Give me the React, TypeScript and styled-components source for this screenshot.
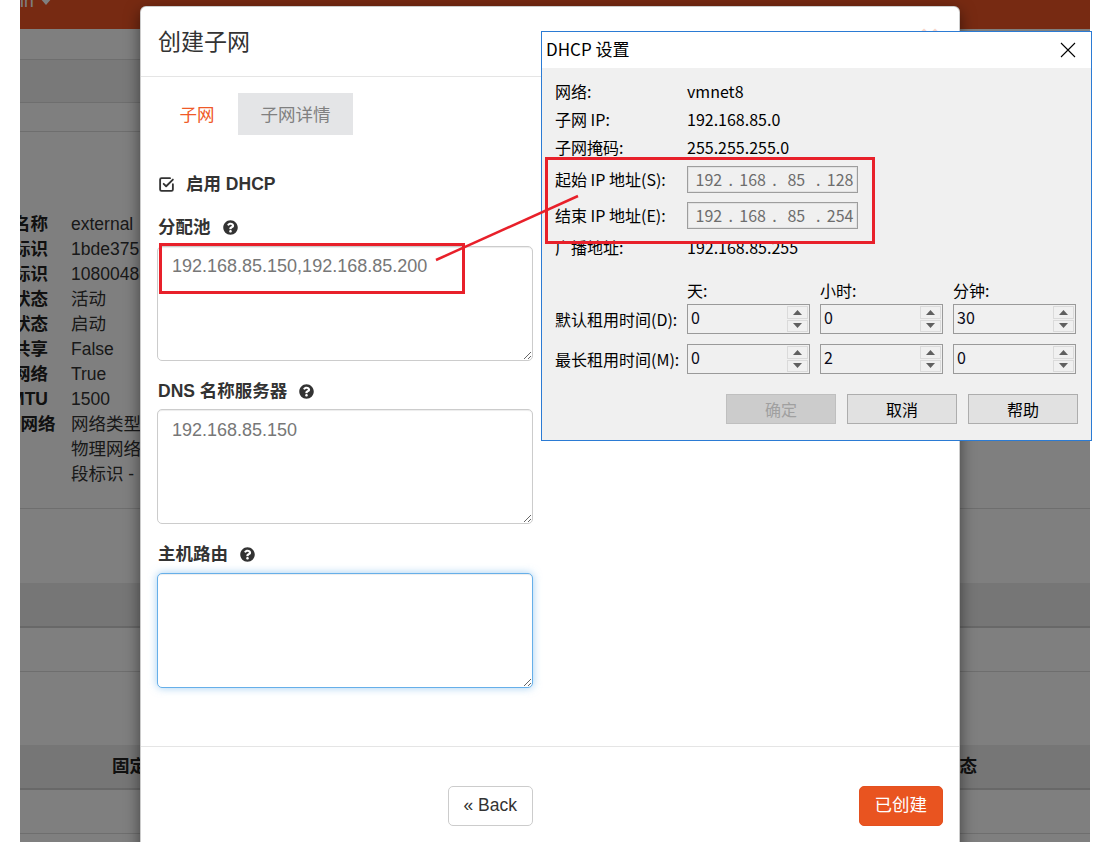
import React from "react";
import styled, { createGlobalStyle } from "styled-components";
import { FaQuestionCircle } from "react-icons/fa";

const GlobalStyle = createGlobalStyle`
  html, body { margin: 0; padding: 0; background: #fff; }
  body { font-family: "Liberation Sans", "Noto Sans CJK SC", sans-serif; }
  * { box-sizing: border-box; }
`;

const Canvas = styled.div`
  position: relative;
  width: 1095px;
  height: 857px;
  overflow: hidden;
`;

const Screen = styled.div`
  position: relative;
  margin-left: 20px;
  width: 1070px;
  height: 842px;
  overflow: hidden;
  background: #fff;
  font-family: "Liberation Sans", "Noto Sans CJK SC", sans-serif;
  color: #333;
  font-size: 17.5px;
  line-height: 25px;
`;

/* ---------- background page ---------- */
const Navbar = styled.div`
  height: 29px;
  background: #ee5424;
  display: flex;
  align-items: flex-start;
`;

const UserMenu = styled.div`
  display: flex;
  align-items: center;
  margin-left: -34px;
  margin-top: -8px;
  color: #fff;
  line-height: 18px;
  white-space: nowrap;
`;

const Caret = styled.span`
  display: inline-block;
  margin-left: 6px;
  border-left: 6px solid transparent;
  border-right: 6px solid transparent;
  border-top: 7px solid #fff;
`;

const Band = styled.div<{ $h: number; $bg?: string; $line?: number }>`
  height: ${(p) => p.$h}px;
  background: ${(p) => p.$bg || "#fff"};
  border-bottom: ${(p) => (p.$line ? `${p.$line}px solid #dcdcdc` : "none")};
`;

const DetailSection = styled.div`
  height: 377px;
  padding-top: 80px;
  border-bottom: 1px solid #dcdcdc;
`;

const DetailList = styled.dl`
  margin: 0 0 0 -52px;
  display: grid;
  grid-template-columns: 80px auto;
  column-gap: 23px;
  white-space: nowrap;
`;

const DetailTerm = styled.dt`
  font-weight: bold;
  text-align: right;
  color: #222;
`;

const DetailValue = styled.dd`
  margin: 0;
`;

const TableHead = styled.div`
  height: 45px;
  background: #ececec;
  border-bottom: 2px solid #d0d0d0;
  display: flex;
  align-items: center;
  font-weight: bold;
  color: #222;
`;

const HeadCell = styled.span<{ $right?: boolean }>`
  margin-left: ${(p) => (p.$right ? "auto" : "92px")};
  margin-right: ${(p) => (p.$right ? "113px" : "0")};
`;

const Backdrop = styled.div`
  position: absolute;
  inset: 0;
  background: rgba(0, 0, 0, 0.5);
`;

/* ---------- modal ---------- */
const Modal = styled.div`
  position: absolute;
  left: 120px;
  top: 6px;
  width: 820px;
  background: #fff;
  border: 1px solid rgba(0, 0, 0, 0.2);
  border-radius: 6px;
  box-shadow: 0 5px 15px rgba(0, 0, 0, 0.5);
`;

const ModalHeader = styled.div`
  height: 70px;
  display: flex;
  align-items: center;
  justify-content: space-between;
  padding: 0 16px 0 17px;
  border-bottom: 1px solid #e5e5e5;
`;

const ModalTitle = styled.h4`
  margin: 0 0 2px;
  font-family: "Noto Sans CJK SC", sans-serif;
  font-size: 23px;
  font-weight: 400;
  color: #333;
`;

const CloseX = styled.span`
  margin-top: -10px;
  margin-right: 4px;
  font-size: 32px;
  font-weight: bold;
  color: #e95420;
  opacity: 0.25;
`;

const ModalBody = styled.div`
  padding: 16px 16px 58px;
  border-bottom: 1px solid #e5e5e5;
`;

const Tabs = styled.div`
  display: flex;
  gap: 1px;
`;

const Tab = styled.div<{ $active?: boolean }>`
  padding: 8px 22.5px 9px;
  font-family: "Noto Sans CJK SC", sans-serif;
  font-size: 17.5px;
  line-height: 25px;
  color: ${(p) => (p.$active ? "#ef5a28" : "#808080")};
  background: ${(p) => (p.$active ? "transparent" : "#e4e5e7")};
`;

const FormGrid = styled.div`
  margin-top: 37px;
  display: grid;
  grid-template-columns: 376px 1fr;
  column-gap: 20px;
`;

const FormColumn = styled.div`
  display: flex;
  flex-direction: column;
`;

const CheckRow = styled.div`
  display: flex;
  align-items: center;
  gap: 11px;
  height: 25px;
  font-weight: bold;
  padding-left: 1px;
`;

const FormGroup = styled.div`
  margin-top: 18px;
`;

const FieldLabel = styled.div`
  display: flex;
  align-items: center;
  gap: 12px;
  margin-bottom: 5.5px;
  font-weight: bold;
  padding-left: 1px;
  color: #333;
`;

const TextArea = styled.textarea<{ $focused?: boolean }>`
  display: block;
  width: 100%;
  height: 115px;
  margin: 0;
  padding: 7.5px 14px;
  font-family: "Liberation Sans", sans-serif;
  font-size: 18px;
  line-height: 25px;
  color: #777;
  background: #fff;
  border: 1px solid ${(p) => (p.$focused ? "#66afe9" : "#ccc")};
  border-radius: 5px;
  box-shadow: inset 0 1px 1px rgba(0, 0, 0, 0.075)
    ${(p) => (p.$focused ? ", 0 0 8px rgba(102, 175, 233, 0.6)" : "")};
  resize: vertical;
  outline: none;
`;

const ModalFooter = styled.div`
  padding: 39px 16px 40px;
  display: grid;
  grid-template-columns: 376px 1fr;
  column-gap: 20px;
`;

const Button = styled.button<{ $primary?: boolean }>`
  justify-self: end;
  padding: 6.5px 15px;
  font-family: "Liberation Sans", "Noto Sans CJK SC", sans-serif;
  font-size: 17.5px;
  line-height: 25px;
  border-radius: 5px;
  border: 1px solid ${(p) => (p.$primary ? "#e4501f" : "#ccc")};
  background: ${(p) => (p.$primary ? "#e95420" : "#fff")};
  color: ${(p) => (p.$primary ? "#fff" : "#333")};
`;

/* ---------- DHCP dialog ---------- */
const Dialog = styled.div`
  position: absolute;
  left: 541px;
  top: 31px;
  width: 551px;
  height: 410px;
  border: 1px solid #2b7bd4;
  background: #f0f0f0;
  font-family: "Noto Sans CJK SC", "Liberation Sans", sans-serif;
  font-size: 16px;
  color: #000;
`;

const TitleBar = styled.div`
  height: 36px;
  background: #fff;
  display: flex;
  align-items: center;
  justify-content: space-between;
  padding-left: 4px;
`;

const DialogTitle = styled.span`
  font-size: 17px;
  margin-bottom: 3px;
`;

const TitleClose = styled.div`
  width: 46px;
  height: 36px;
  display: flex;
  align-items: center;
  justify-content: center;
`;

const DialogBody = styled.div`
  padding: 9px 13px 0 13px;
`;

const InfoGrid = styled.div`
  display: grid;
  grid-template-columns: 132px 1fr;
  grid-template-rows: 28px 28px 28px 36px 36px 28px;
  align-items: center;
  white-space: nowrap;
`;

const IpBox = styled.div`
  width: 171px;
  height: 27px;
  display: flex;
  align-items: center;
  padding-left: 4px;
  border: 1px solid #9d9d9d;
  box-shadow: inset 0 0 0 1px #e2e2e2;
  color: #6d6d6d;
`;

const IpField = styled.span`
  width: 34px;
  text-align: center;
`;

const IpDot = styled.span`
  width: 10px;
  text-align: center;
`;

const LeaseGrid = styled.div<{ $gap?: number; $top?: number }>`
  display: grid;
  grid-template-columns: 122px 123px 123px 123px;
  column-gap: 10px;
  row-gap: ${(p) => p.$gap || 0}px;
  margin-top: ${(p) => p.$top || 0}px;
  align-items: center;
  white-space: nowrap;
`;

const LeaseHeadCell = styled.div`
  height: 28px;
  line-height: 28px;
`;

const Spinner = styled.div`
  height: 30px;
  display: flex;
  border: 1px solid #9a9a9a;
  background: #f0f0f0;
`;

const SpinValue = styled.div`
  flex: 1;
  padding: 0 0 0 3px;
  line-height: 24px;
  color: #0a0a1a;
`;

const SpinButtons = styled.div`
  width: 23px;
  display: flex;
  flex-direction: column;
  gap: 1px;
  padding: 1px;
`;

const SpinButton = styled.div`
  flex: 1;
  display: flex;
  align-items: center;
  justify-content: center;
  border: 1px solid #dadada;
  background: #f0f0f0;
`;

const DialogButtons = styled.div`
  margin-top: 20px;
  display: flex;
  justify-content: flex-end;
  gap: 11px;
`;

const WinButton = styled.div<{ $disabled?: boolean }>`
  width: 110px;
  height: 30px;
  display: flex;
  align-items: center;
  justify-content: center;
  border: 1px solid ${(p) => (p.$disabled ? "#bfbfbf" : "#adadad")};
  background: ${(p) => (p.$disabled ? "#cccccc" : "#e1e1e1")};
  color: ${(p) => (p.$disabled ? "#a0a0a0" : "#000")};
`;

/* ---------- annotations ---------- */
const RedBox = styled.div<{ $x: number; $y: number; $w: number; $h: number }>`
  position: absolute;
  left: ${(p) => p.$x}px;
  top: ${(p) => p.$y}px;
  width: ${(p) => p.$w}px;
  height: ${(p) => p.$h}px;
  border: 3px solid #e8202a;
`;

const ArrowLine = styled.svg`
  position: absolute;
  left: 430px;
  top: 190px;
`;

const CheckIcon = () => (
  <svg width="17" height="17" viewBox="0 0 24 24" fill="none" stroke="#333" strokeWidth="2.6" strokeLinecap="round" strokeLinejoin="round">
    <path d="M21 11.5V19a2 2 0 0 1-2 2H5a2 2 0 0 1-2-2V5a2 2 0 0 1 2-2h12" />
    <path d="m8 11 3.5 3.5L21 5" />
  </svg>
);

const ArrowUp = () => (
  <svg width="9" height="5" viewBox="0 0 9 5"><polygon points="4.5,0 9,5 0,5" fill="#606060" /></svg>
);
const ArrowDown = () => (
  <svg width="9" height="5" viewBox="0 0 9 5"><polygon points="0,0 9,0 4.5,5" fill="#606060" /></svg>
);

const SpinBox = ({ value }: { value: string }) => (
  <Spinner>
    <SpinValue>{value}</SpinValue>
    <SpinButtons>
      <SpinButton><ArrowUp /></SpinButton>
      <SpinButton><ArrowDown /></SpinButton>
    </SpinButtons>
  </Spinner>
);

const IpInput = ({ parts }: { parts: string[] }) => (
  <IpBox>
    {parts.map((p, i) => (
      <React.Fragment key={i}>
        {i > 0 && <IpDot>.</IpDot>}
        <IpField>{p}</IpField>
      </React.Fragment>
    ))}
  </IpBox>
);

const details: [string, string][] = [
  ["名称", "external"],
  ["标识", "1bde3751-8b4e-4fb8-a1ab-3c1e6f1d2a55"],
  ["项目标识", "1080048d6c2e4e6b9b0a5f3c"],
  ["状态", "活动"],
  ["管理状态", "启动"],
  ["共享", "False"],
  ["外部网络", "True"],
  ["MTU", "1500"],
  ["提供者网络", "网络类型 flat"],
  ["", "物理网络 provider"],
  ["", "段标识 -"],
];

export default function App() {
  return (
    <Canvas>
      <GlobalStyle />
      <Screen>
        <Navbar>
          <UserMenu>
            admin<Caret />
          </UserMenu>
        </Navbar>
        <Band $h={31} $line={1} />
        <Band $h={43} $bg="#f3f3f3" $line={1} />
        <Band $h={29} $line={1} />
        <DetailSection>
          <DetailList>
            {details.map(([k, v], i) => (
              <React.Fragment key={i}>
                <DetailTerm>{k}</DetailTerm>
                <DetailValue>{v}</DetailValue>
              </React.Fragment>
            ))}
          </DetailList>
        </DetailSection>
        <Band $h={74} />
        <TableHead />
        <Band $h={44} $line={1} />
        <Band $h={73} />
        <TableHead>
          <HeadCell>固定IP</HeadCell>
          <HeadCell $right>状态</HeadCell>
        </TableHead>
        <Band $h={44} $line={1} />

        <Backdrop />

        <Modal>
          <ModalHeader>
            <ModalTitle>创建子网</ModalTitle>
            <CloseX>×</CloseX>
          </ModalHeader>
          <ModalBody>
            <Tabs>
              <Tab $active>子网</Tab>
              <Tab>子网详情</Tab>
            </Tabs>
            <FormGrid>
              <FormColumn>
                <CheckRow>
                  <CheckIcon />
                  <span>启用 DHCP</span>
                </CheckRow>
                <FormGroup>
                  <FieldLabel>
                    分配池 <FaQuestionCircle size={15} color="#333" />
                  </FieldLabel>
                  <TextArea readOnly defaultValue="192.168.85.150,192.168.85.200" />
                </FormGroup>
                <FormGroup>
                  <FieldLabel>
                    DNS 名称服务器 <FaQuestionCircle size={15} color="#333" />
                  </FieldLabel>
                  <TextArea readOnly defaultValue="192.168.85.150" />
                </FormGroup>
                <FormGroup>
                  <FieldLabel>
                    主机路由 <FaQuestionCircle size={15} color="#333" />
                  </FieldLabel>
                  <TextArea readOnly $focused defaultValue="" />
                </FormGroup>
              </FormColumn>
              <div />
            </FormGrid>
          </ModalBody>
          <ModalFooter>
            <Button>« Back</Button>
            <Button $primary>已创建</Button>
          </ModalFooter>
        </Modal>
      </Screen>

      <Dialog>
        <TitleBar>
          <DialogTitle>DHCP 设置</DialogTitle>
          <TitleClose>
            <svg width="16" height="16" viewBox="0 0 16 16">
              <path d="M1 1 L15 15 M15 1 L1 15" stroke="#000" strokeWidth="1.1" />
            </svg>
          </TitleClose>
        </TitleBar>
        <DialogBody>
          <InfoGrid>
            <span>网络:</span>
            <span>vmnet8</span>
            <span>子网 IP:</span>
            <span>192.168.85.0</span>
            <span>子网掩码:</span>
            <span>255.255.255.0</span>
            <span>起始 IP 地址(S):</span>
            <IpInput parts={["192", "168", "85", "128"]} />
            <span>结束 IP 地址(E):</span>
            <IpInput parts={["192", "168", "85", "254"]} />
            <span>广播地址:</span>
            <span>192.168.85.255</span>
          </InfoGrid>
          <LeaseGrid $top={15}>
            <LeaseHeadCell />
            <LeaseHeadCell>天:</LeaseHeadCell>
            <LeaseHeadCell>小时:</LeaseHeadCell>
            <LeaseHeadCell>分钟:</LeaseHeadCell>
          </LeaseGrid>
          <LeaseGrid $gap={10}>
            <span>默认租用时间(D):</span>
            <SpinBox value="0" />
            <SpinBox value="0" />
            <SpinBox value="30" />
            <span>最长租用时间(M):</span>
            <SpinBox value="0" />
            <SpinBox value="2" />
            <SpinBox value="0" />
          </LeaseGrid>
          <DialogButtons>
            <WinButton $disabled>确定</WinButton>
            <WinButton>取消</WinButton>
            <WinButton>帮助</WinButton>
          </DialogButtons>
        </DialogBody>
      </Dialog>

      <RedBox $x={159} $y={243} $w={306} $h={51} />
      <RedBox $x={545} $y={157} $w={330} $h={87} />
      <ArrowLine width="160" height="80" viewBox="0 0 160 80">
        <line x1="6" y1="70" x2="148" y2="6" stroke="#e8202a" strokeWidth="2.5" />
      </ArrowLine>
    </Canvas>
  );
}
